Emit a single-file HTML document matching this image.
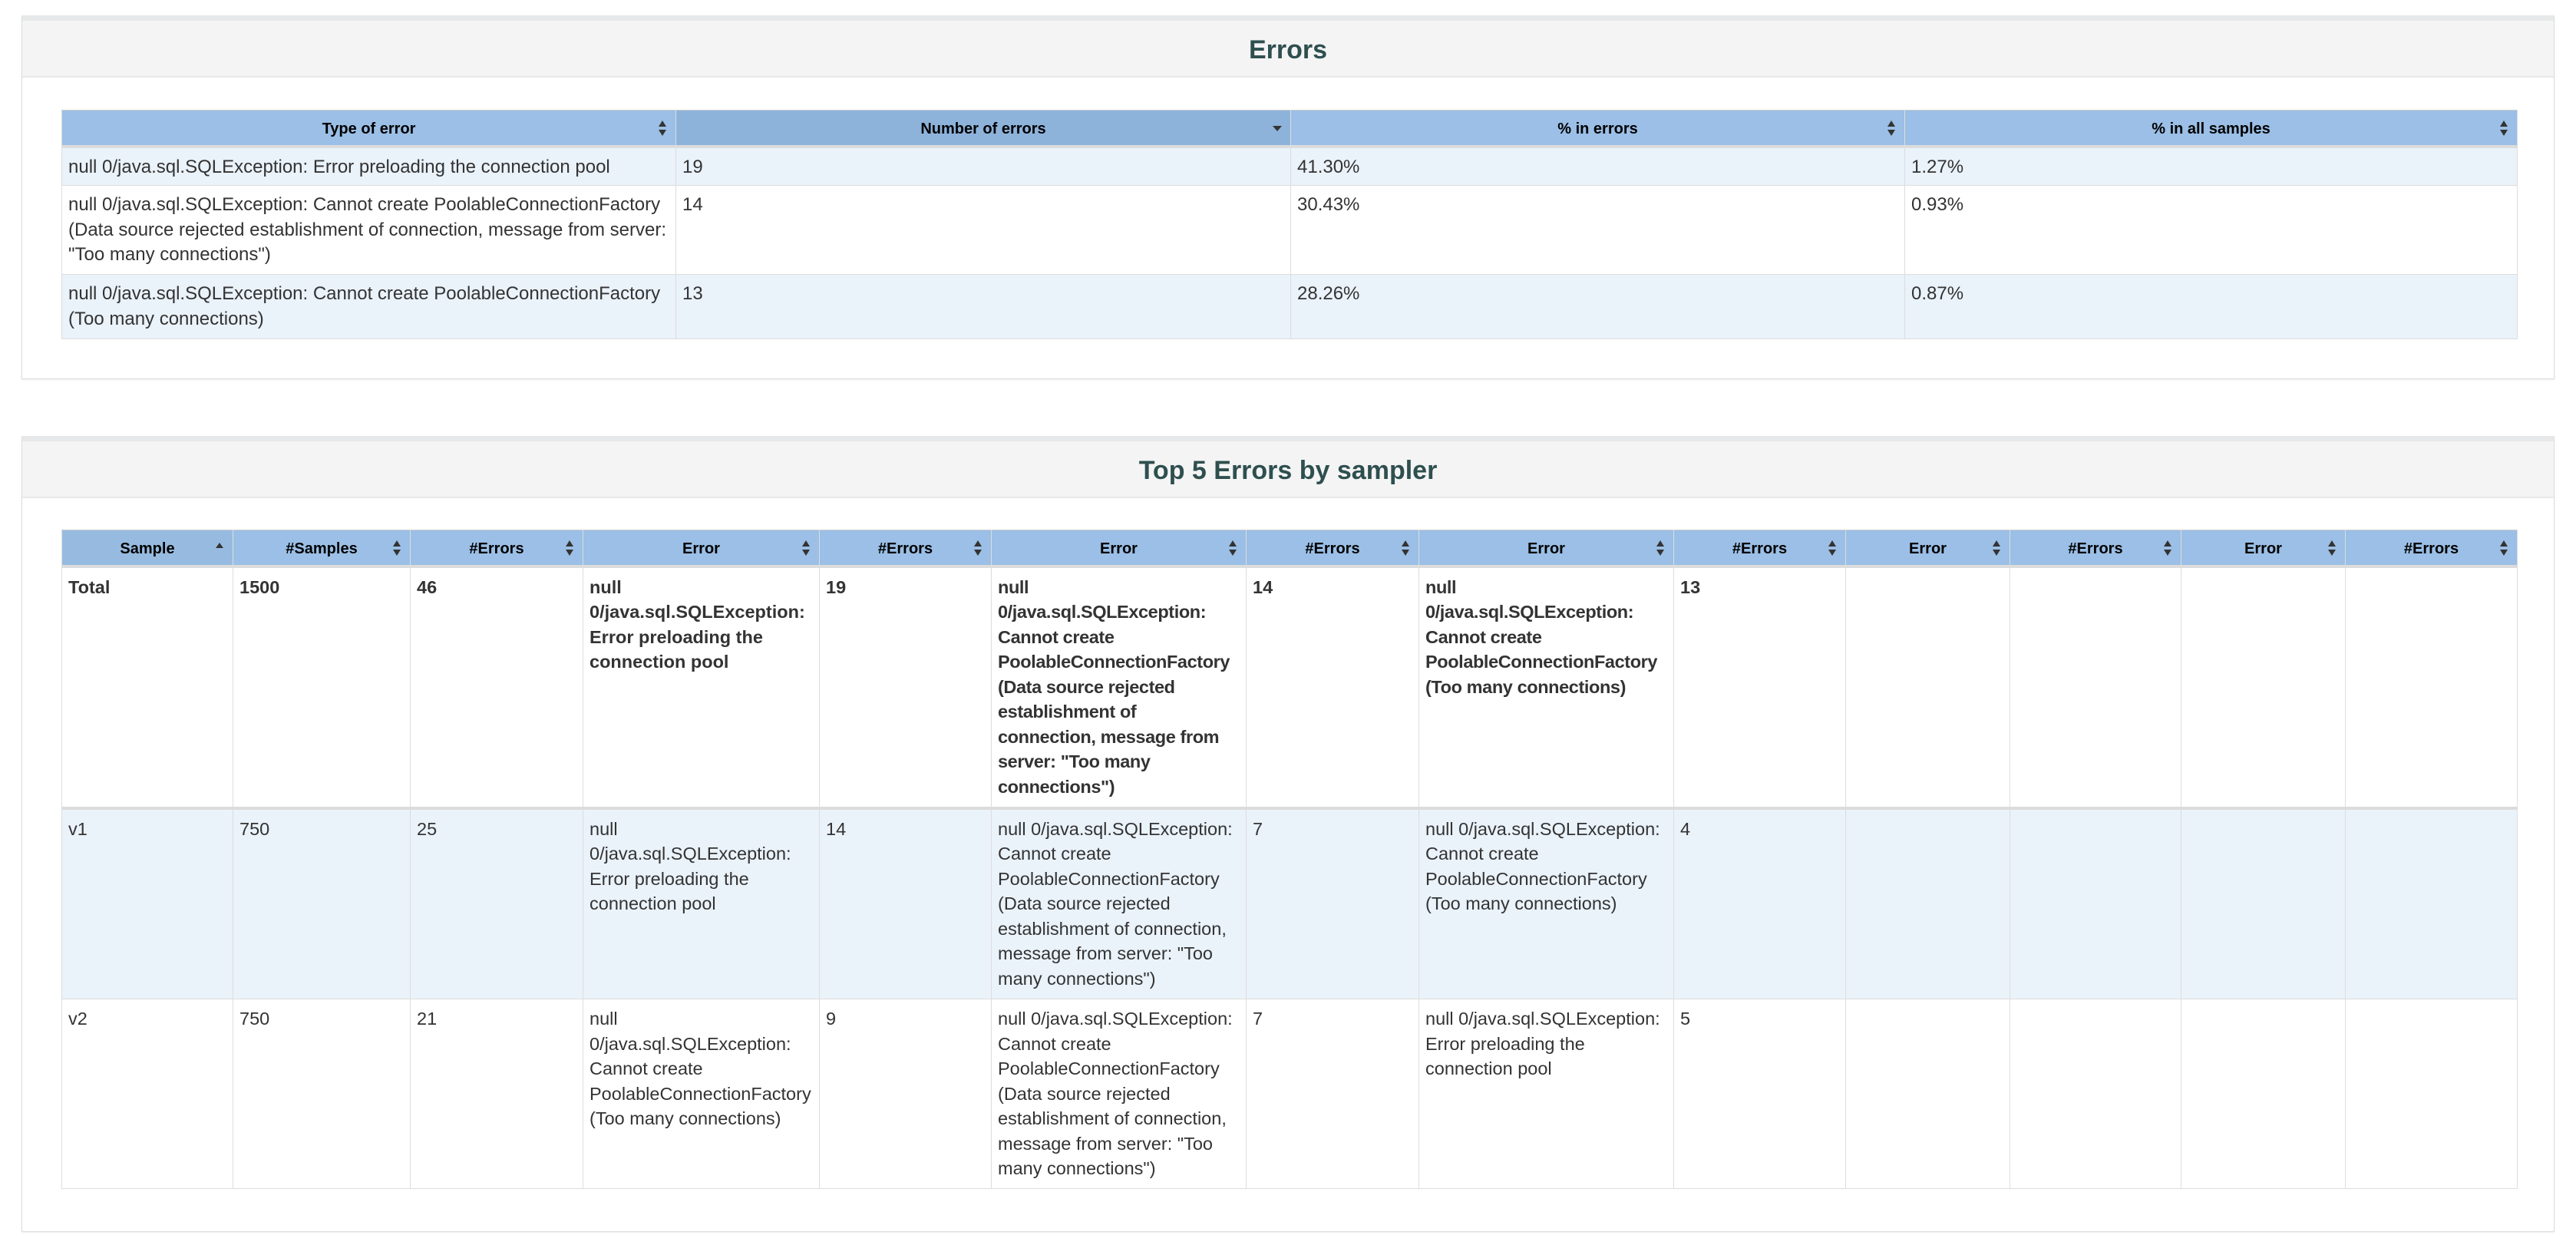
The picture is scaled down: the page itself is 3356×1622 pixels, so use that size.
<!DOCTYPE html>
<html><head><meta charset="utf-8">
<style>
html,body{margin:0;padding:0;background:#fff;width:3356px;height:1622px;overflow:hidden}
body{font-family:"Liberation Sans",Arial,sans-serif;color:#333;position:relative}
.panel{position:absolute;left:28px;width:3300px;border:1px solid #ddd;border-top:7px solid #e6e8ea;background:#fff;box-shadow:0 1px 2px rgba(0,0,0,.08);box-sizing:border-box}
.ph{height:72px;background:#f4f4f4;border-bottom:2px solid #e8e8e8;text-align:center;font-weight:bold;font-size:34px;color:#2f4f4f;line-height:76px}
table{position:absolute;left:51px;border-collapse:collapse;table-layout:fixed;font-size:24px;line-height:32.5px}
table.t2{font-size:23.5px}
th{background:#9bbfe6;font-size:20px;font-weight:bold;color:#000;height:47px;padding:4px 8px 0;border:1px solid #ddd;border-top:1px solid #ccc;border-bottom:4px solid #dcdcdc;position:relative;text-align:center;box-sizing:border-box}
th.s{background:#8db3db}
td{border:1px solid #ddd;padding:9px 8px 7px;vertical-align:top;box-sizing:border-box;overflow:visible;white-space:normal}
tr.o td{background:#eaf2fa}
.ic{position:absolute;right:11px;top:10px;width:12px;height:26px}
.bold td{font-weight:bold;border-bottom:4px solid #dcdcdc}
.bold td.n{letter-spacing:-0.4px}
.nw{white-space:nowrap}
</style></head><body>

<div class="panel" style="top:20px;height:474px">
<div class="ph">Errors</div>
<table style="top:116px;width:3199px">
<colgroup><col style="width:800px"><col style="width:801px"><col style="width:800px"><col style="width:798px"></colgroup>
<tr><th>Type of error<svg class="ic" viewBox="0 0 12 26"><path d="M6 3L11 11H1Z M1 15H11L6 23Z" fill="#333"/></svg></th>
<th class="s">Number of errors<svg class="ic" viewBox="0 0 12 26"><path d="M0 10H12L6 17Z" fill="#333"/></svg></th>
<th>% in errors<svg class="ic" viewBox="0 0 12 26"><path d="M6 3L11 11H1Z M1 15H11L6 23Z" fill="#333"/></svg></th>
<th>% in all samples<svg class="ic" viewBox="0 0 12 26"><path d="M6 3L11 11H1Z M1 15H11L6 23Z" fill="#333"/></svg></th></tr>
<tr class="o" style="height:50px"><td>null 0/java.sql.SQLException: Error preloading the connection pool</td><td>19</td><td>41.30%</td><td>1.27%</td></tr>
<tr style="height:116px"><td>null 0/java.sql.SQLException: Cannot create PoolableConnectionFactory (Data source rejected establishment of connection, message from server: "Too many connections")</td><td>14</td><td>30.43%</td><td>0.93%</td></tr>
<tr class="o" style="height:84px"><td>null 0/java.sql.SQLException: Cannot create PoolableConnectionFactory (Too many connections)</td><td>13</td><td>28.26%</td><td>0.87%</td></tr>
</table>
</div>

<div class="panel" style="top:568px;height:1037px">
<div class="ph">Top 5 Errors by sampler</div>
<table class="t2" style="top:115px;width:3199px">
<colgroup><col style="width:223px"><col style="width:231px"><col style="width:225px"><col style="width:308px"><col style="width:224px"><col style="width:332px"><col style="width:225px"><col style="width:332px"><col style="width:224px"><col style="width:214px"><col style="width:223px"><col style="width:214px"><col style="width:224px"></colgroup>
<tr><th style="background:#97bbe0">Sample<svg class="ic" viewBox="0 0 12 26"><path d="M6 6L11 13H1Z" fill="#333"/></svg></th>
<th>#Samples<svg class="ic" viewBox="0 0 12 26"><path d="M6 3L11 11H1Z M1 15H11L6 23Z" fill="#333"/></svg></th>
<th>#Errors<svg class="ic" viewBox="0 0 12 26"><path d="M6 3L11 11H1Z M1 15H11L6 23Z" fill="#333"/></svg></th>
<th>Error<svg class="ic" viewBox="0 0 12 26"><path d="M6 3L11 11H1Z M1 15H11L6 23Z" fill="#333"/></svg></th>
<th>#Errors<svg class="ic" viewBox="0 0 12 26"><path d="M6 3L11 11H1Z M1 15H11L6 23Z" fill="#333"/></svg></th>
<th>Error<svg class="ic" viewBox="0 0 12 26"><path d="M6 3L11 11H1Z M1 15H11L6 23Z" fill="#333"/></svg></th>
<th>#Errors<svg class="ic" viewBox="0 0 12 26"><path d="M6 3L11 11H1Z M1 15H11L6 23Z" fill="#333"/></svg></th>
<th>Error<svg class="ic" viewBox="0 0 12 26"><path d="M6 3L11 11H1Z M1 15H11L6 23Z" fill="#333"/></svg></th>
<th>#Errors<svg class="ic" viewBox="0 0 12 26"><path d="M6 3L11 11H1Z M1 15H11L6 23Z" fill="#333"/></svg></th>
<th>Error<svg class="ic" viewBox="0 0 12 26"><path d="M6 3L11 11H1Z M1 15H11L6 23Z" fill="#333"/></svg></th>
<th>#Errors<svg class="ic" viewBox="0 0 12 26"><path d="M6 3L11 11H1Z M1 15H11L6 23Z" fill="#333"/></svg></th>
<th>Error<svg class="ic" viewBox="0 0 12 26"><path d="M6 3L11 11H1Z M1 15H11L6 23Z" fill="#333"/></svg></th>
<th>#Errors<svg class="ic" viewBox="0 0 12 26"><path d="M6 3L11 11H1Z M1 15H11L6 23Z" fill="#333"/></svg></th></tr>
<tr class="bold" style="height:315px"><td>Total</td><td>1500</td><td>46</td><td>null 0/java.sql.SQLException: Error preloading the connection pool</td><td>19</td><td class="n"><span class="nw">null</span><br><span class="nw">0/java.sql.SQLException:</span><br><span class="nw">Cannot create</span><br><span class="nw">PoolableConnectionFactory</span><br><span class="nw">(Data source rejected</span><br><span class="nw">establishment of</span><br><span class="nw">connection, message from</span><br><span class="nw">server: "Too many</span><br><span class="nw">connections")</span></td><td>14</td><td class="n">null 0/java.sql.SQLException: Cannot create PoolableConnectionFactory (Too many connections)</td><td>13</td><td></td><td></td><td></td><td></td></tr>
<tr class="o" style="height:249px"><td>v1</td><td>750</td><td>25</td><td>null 0/java.sql.SQLException: Error preloading the connection pool</td><td>14</td><td>null 0/java.sql.SQLException: Cannot create PoolableConnectionFactory (Data source rejected establishment of connection, message from server: "Too many connections")</td><td>7</td><td>null 0/java.sql.SQLException: Cannot create PoolableConnectionFactory (Too many connections)</td><td>4</td><td></td><td></td><td></td><td></td></tr>
<tr style="height:247px"><td>v2</td><td>750</td><td>21</td><td>null 0/java.sql.SQLException: Cannot create PoolableConnectionFactory (Too many connections)</td><td>9</td><td>null 0/java.sql.SQLException: Cannot create PoolableConnectionFactory (Data source rejected establishment of connection, message from server: "Too many connections")</td><td>7</td><td>null 0/java.sql.SQLException: Error preloading the connection pool</td><td>5</td><td></td><td></td><td></td><td></td></tr>
</table>
</div>
</body></html>
